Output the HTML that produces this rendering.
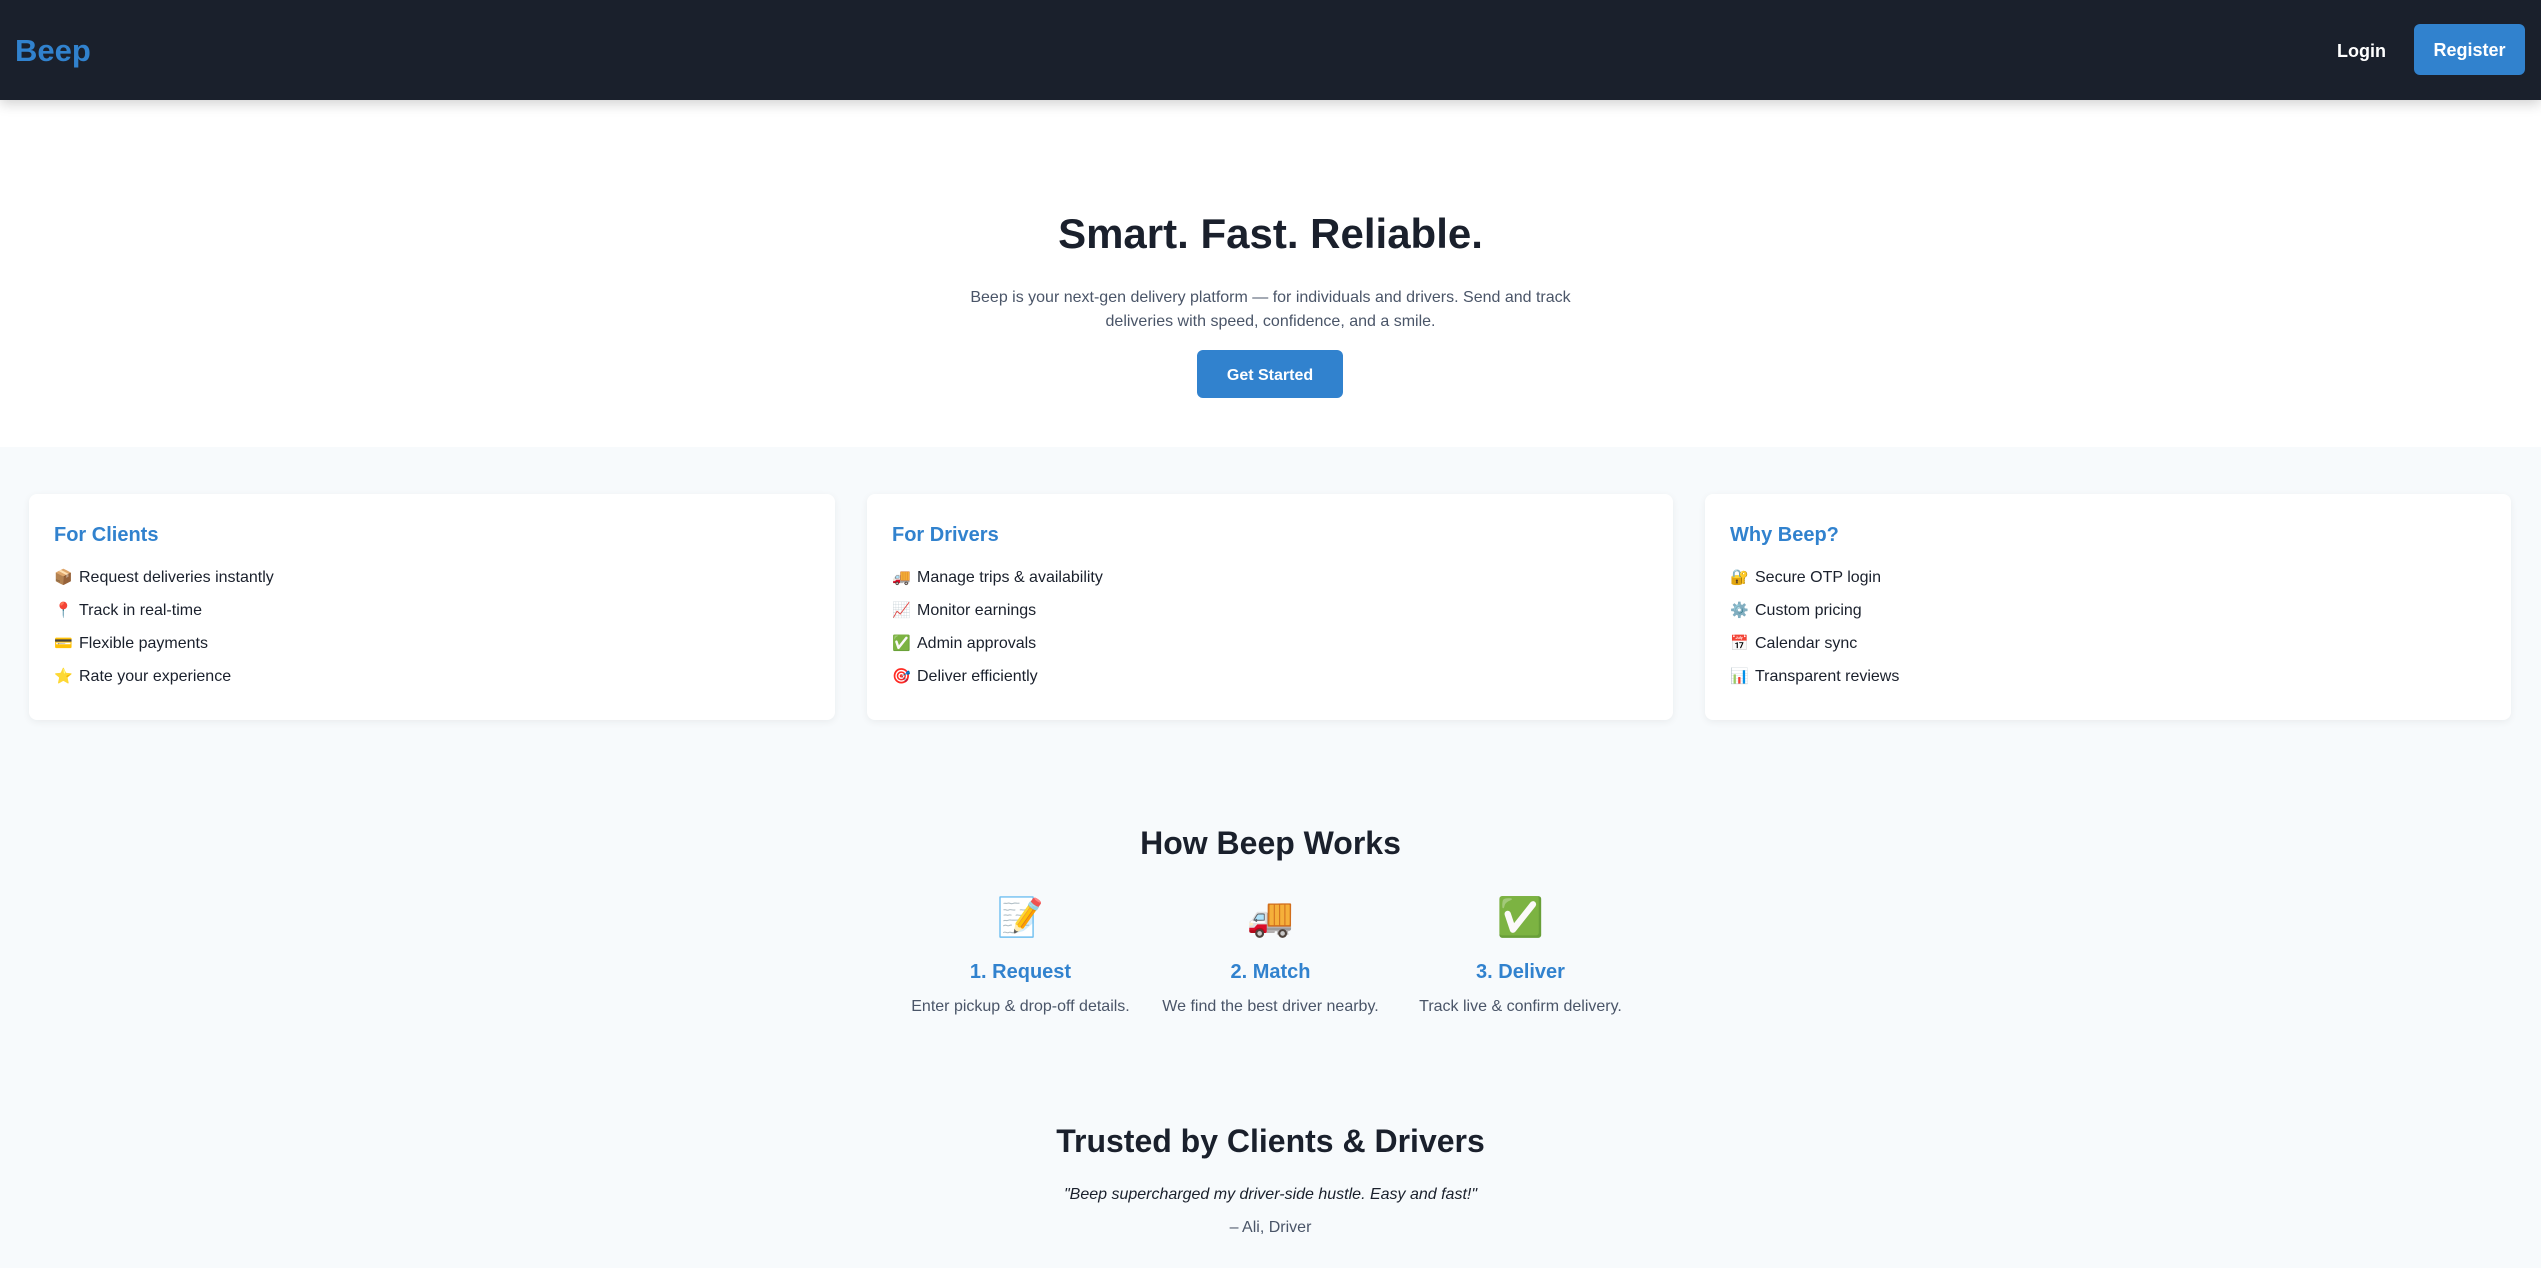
<!DOCTYPE html>
<html><head><meta charset="utf-8"><style>
*{margin:0;padding:0;box-sizing:border-box}
html,body{width:2541px;height:1268px;overflow:hidden}
body{background:#f7fafc;font-family:"Liberation Sans","DejaVu Sans",sans-serif;color:#1a202c;position:relative}
.nav{position:absolute;left:0;top:0;width:2541px;height:100px;background:#1a202c;box-shadow:0 4px 12px rgba(0,0,0,.18);z-index:2}
.logo{position:absolute;left:15px;top:33px;font-size:31px;font-weight:bold;color:#3182ce;line-height:36px}
.login{position:absolute;left:2337px;top:39px;color:#fff;font-weight:bold;font-size:18px;line-height:24px}
.reg{position:absolute;left:2414px;top:24px;width:111px;height:51px;background:#3182ce;border-radius:6px;color:#fff;font-weight:bold;font-size:18px;line-height:53px;text-align:center}
.hero{position:absolute;left:0;top:100px;width:2541px;height:347px;background:#fff;text-align:center}
.hero h1{position:absolute;left:0;width:100%;top:108px;font-size:42px;line-height:52px;font-weight:bold;color:#1a202c}
.hero p{position:absolute;left:50%;transform:translateX(-50%);top:186px;width:640px;font-size:16px;line-height:24px;color:#4a5568}
.btn{position:absolute;left:1197px;top:250px;width:146px;height:48px;background:#3182ce;border-radius:6px;color:#fff;font-weight:bold;font-size:16px;line-height:52px}
.card{position:absolute;top:494px;width:806px;height:226px;background:#fff;border-radius:8px;box-shadow:0 2px 8px rgba(0,0,0,.06);padding:0 25px}
.card h3{margin-top:28px;font-size:20px;line-height:26px;color:#3182ce;font-weight:bold}
.card ul{list-style:none;margin-top:13px}
.card li{font-size:16px;line-height:33px;color:#1a202c}
.card li span{display:inline-block;width:25px;font-size:15px}
.h2{position:absolute;left:0;width:100%;text-align:center;font-size:32px;font-weight:bold;line-height:40px;color:#1a202c}
.steps{position:absolute;top:894px;left:0;width:100%;display:flex;justify-content:center;gap:10px}
.step{width:240px;text-align:center}
.step .ic{font-size:38px;line-height:48px;height:48px}
.step h4{margin-top:17px;font-size:20px;line-height:26px;color:#3182ce;font-weight:bold}
.step p{margin-top:11px;font-size:16px;line-height:22px;color:#4a5568}
.q{position:absolute;left:0;width:100%;text-align:center;font-size:16px;line-height:22px}
</style></head><body>
<div class="nav"><div class="logo">Beep</div><div class="login">Login</div><div class="reg">Register</div></div>
<div class="hero"><h1>Smart. Fast. Reliable.</h1>
<p>Beep is your next-gen delivery platform — for individuals and drivers. Send and track deliveries with speed, confidence, and a smile.</p>
<div class="btn">Get Started</div></div>
<div class="card" style="left:29px"><h3>For Clients</h3><ul>
<li><span>📦</span>Request deliveries instantly</li><li><span>📍</span>Track in real-time</li><li><span>💳</span>Flexible payments</li><li><span>⭐</span>Rate your experience</li></ul></div>
<div class="card" style="left:867px"><h3>For Drivers</h3><ul>
<li><span>🚚</span>Manage trips &amp; availability</li><li><span>📈</span>Monitor earnings</li><li><span>✅</span>Admin approvals</li><li><span>🎯</span>Deliver efficiently</li></ul></div>
<div class="card" style="left:1705px"><h3>Why Beep?</h3><ul>
<li><span>🔐</span>Secure OTP login</li><li><span>⚙️</span>Custom pricing</li><li><span>📅</span>Calendar sync</li><li><span>📊</span>Transparent reviews</li></ul></div>
<div class="h2" style="top:823px">How Beep Works</div>
<div class="steps">
<div class="step"><div class="ic">📝</div><h4>1. Request</h4><p>Enter pickup &amp; drop-off details.</p></div>
<div class="step"><div class="ic">🚚</div><h4>2. Match</h4><p>We find the best driver nearby.</p></div>
<div class="step"><div class="ic">✅</div><h4>3. Deliver</h4><p>Track live &amp; confirm delivery.</p></div>
</div>
<div class="h2" style="top:1121px">Trusted by Clients &amp; Drivers</div>
<div class="q" style="top:1184px;font-style:italic;color:#1a202c">"Beep supercharged my driver-side hustle. Easy and fast!"</div>
<div class="q" style="top:1217px;color:#4a5568">– Ali, Driver</div>
</body></html>
